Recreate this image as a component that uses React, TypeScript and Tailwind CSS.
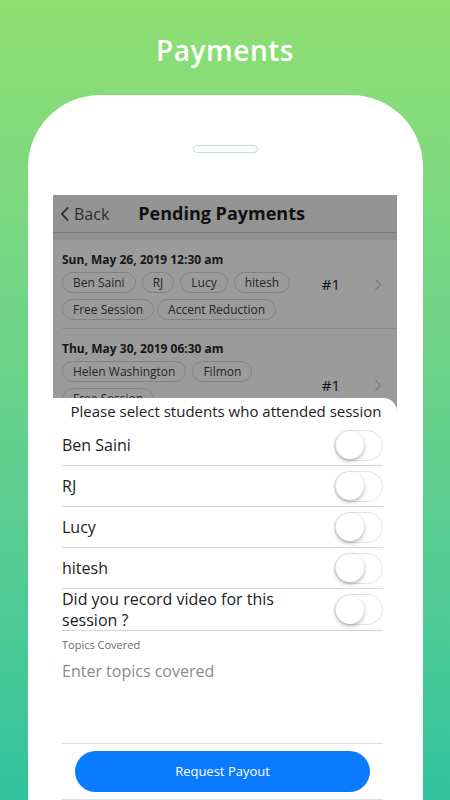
import React from 'react';

// Session shown in the pending payments list
interface Session {
  date: string;
  students: string[];
  tags: string[];
  count: number;
  tall?: boolean;
}

const sessions: Session[] = [
  {
    date: 'Sun, May 26, 2019 12:30 am',
    students: ['Ben Saini', 'RJ', 'Lucy', 'hitesh'],
    tags: ['Free Session', 'Accent Reduction'],
    count: 1,
  },
  {
    date: 'Thu, May 30, 2019 06:30 am',
    students: ['Helen Washington', 'Filmon'],
    tags: ['Free Session'],
    count: 1,
    tall: true,
  },
];

const attendees = ['Ben Saini', 'RJ', 'Lucy', 'hitesh'];

const Pill: React.FC<{ label: string }> = ({ label }) => (
  <span className="h-[21px] px-[10px] flex items-center rounded-full border border-[#838383] text-[12px] text-[#262626]">
    {label}
  </span>
);

// Switch in off state
const Toggle: React.FC = () => (
  <div className="w-[49px] h-[31px] rounded-full border border-[#e2e2e2] bg-white flex items-center px-[1px]">
    <div className="w-[28px] h-[28px] rounded-full bg-white shadow-[0_2px_4px_rgba(0,0,0,0.3)]" />
  </div>
);

const SessionRow: React.FC<{ session: Session }> = ({ session }) => (
  <div className="shrink-0 flex items-start ml-[9px] pt-[12px] pb-[8px] pr-[15px] border-b border-[#8c8c8c]">
    <div className="flex-1 flex flex-col">
      <div className="text-[12px] leading-[16px] font-bold text-[#161616]">{session.date}</div>
      <div className="flex gap-[6px] mt-[4px]">
        {session.students.map(s => (
          <Pill key={s} label={s} />
        ))}
      </div>
      <div className="flex gap-[3px] mt-[6px]">
        {session.tags.map(t => (
          <Pill key={t} label={t} />
        ))}
      </div>
    </div>
    <div className={session.tall ? 'h-[20px] mt-[34px] flex items-center' : 'h-[20px] mt-[22px] flex items-center'}>
      <span className="text-[15px] leading-[20px] text-[#111] mr-[34px]">#{session.count}</span>
      <svg width="8" height="13" viewBox="0 0 8 13" fill="none">
        <polyline points="1.5,1.5 6.5,6.5 1.5,11.5" stroke="#7c7c7c" strokeWidth="1.4" />
      </svg>
    </div>
  </div>
);

export default function App() {
  return (
    <div
      className="w-[450px] h-[800px] overflow-hidden flex flex-col items-center bg-gradient-to-b from-[#8fdf72] to-[#30c39d]"
      style={{ fontFamily: '"Open Sans", "Noto Sans", sans-serif' }}
    >
      <h1 className="mt-[32px] text-[28px] leading-[36px] font-semibold tracking-[0.5px] text-white">Payments</h1>

      {/* Phone frame */}
      <div className="mt-[27px] w-[395px] flex-1 min-h-0 bg-white rounded-t-[72px] flex flex-col items-center">
        <div className="mt-[50px] w-[65px] h-[8px] rounded-full border border-[#c5dcd8]" />

        {/* Screen */}
        <div className="mt-[42px] w-[344px] flex-1 min-h-0 flex flex-col bg-[#9b9b9b] overflow-hidden">
          <div className="h-[203px] shrink-0 overflow-hidden flex flex-col">
            <div className="h-[38px] shrink-0 flex items-center pl-[7px] bg-[#949494] border-b border-[#7f7f7f]">
              <svg width="10" height="16" viewBox="0 0 10 16" fill="none">
                <polyline points="8,1.5 2,8 8,14.5" stroke="#2b2b2b" strokeWidth="1.8" />
              </svg>
              <span className="ml-[4px] text-[16px] text-[#2e2e2e]">Back</span>
              <span className="ml-[29px] text-[18px] font-bold text-[#111]">Pending Payments</span>
            </div>
            <div className="h-[7px] shrink-0 bg-[#909090]" />
            {sessions.map((s, i) => (
              <SessionRow key={i} session={s} />
            ))}
          </div>

          {/* Attendance sheet */}
          <div className="flex-1 bg-white rounded-tr-[14px] flex flex-col">
            <div className="h-[27px] flex items-center justify-center pl-[2px] text-[15px] text-[#222]">
              Please select students who attended session
            </div>
            <div className="ml-[9px] mr-[14px] flex flex-col">
              {attendees.map(name => (
                <div key={name} className="h-[41px] flex items-center justify-between border-b border-[#d4d4d4]">
                  <span className="text-[16px] text-[#222]">{name}</span>
                  <Toggle />
                </div>
              ))}
              <div className="h-[42px] flex items-center justify-between border-b border-[#d4d4d4]">
                <span className="max-w-[250px] text-[16px] leading-[21px] text-[#222]">
                  Did you record video for this session ?
                </span>
                <Toggle />
              </div>
              <div className="mt-[7px] text-[11px] leading-[14px] text-[#6a6a6a]">Topics Covered</div>
              <div className="mt-[8px] text-[16px] leading-[22px] text-[#8a8a8a]">Enter topics covered</div>
              <div className="h-[61px]" />
              <div className="border-t border-[#dedede]" />
              <button className="mt-[7px] mx-[13px] h-[41px] rounded-full bg-[#0a7bff] text-white text-[13px] font-medium">
                Request Payout
              </button>
              <div className="mt-[7px] border-t border-[#dedede]" />
            </div>
          </div>
        </div>
      </div>
    </div>
  );
}
